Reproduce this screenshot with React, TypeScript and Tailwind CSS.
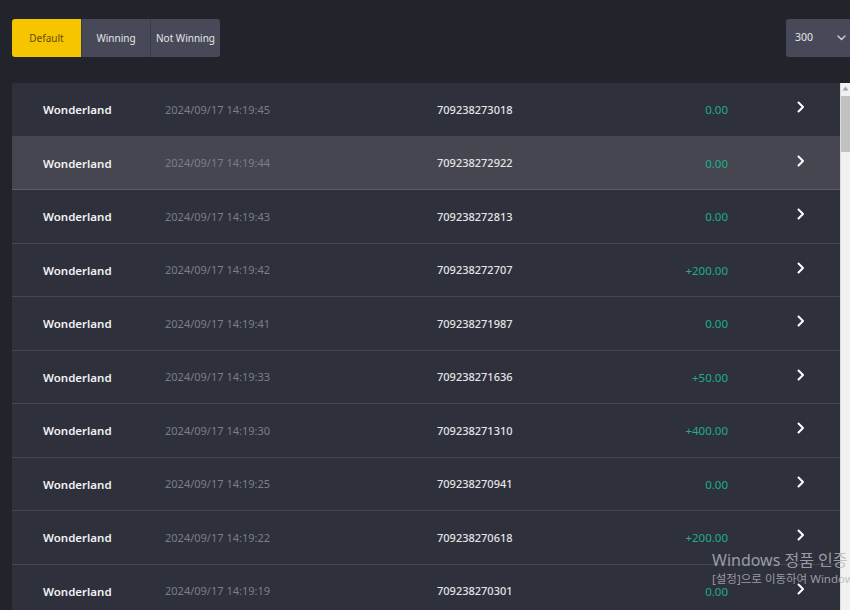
import React from "react";

const rows = [
  { date: "2024/09/17 14:19:45", id: "709238273018", amt: "0.00" },
  { date: "2024/09/17 14:19:44", id: "709238272922", amt: "0.00", hover: true },
  { date: "2024/09/17 14:19:43", id: "709238272813", amt: "0.00" },
  { date: "2024/09/17 14:19:42", id: "709238272707", amt: "+200.00" },
  { date: "2024/09/17 14:19:41", id: "709238271987", amt: "0.00" },
  { date: "2024/09/17 14:19:33", id: "709238271636", amt: "+50.00" },
  { date: "2024/09/17 14:19:30", id: "709238271310", amt: "+400.00" },
  { date: "2024/09/17 14:19:25", id: "709238270941", amt: "0.00" },
  { date: "2024/09/17 14:19:22", id: "709238270618", amt: "+200.00" },
  { date: "2024/09/17 14:19:19", id: "709238270301", amt: "0.00" },
];

function Chevron() {
  return (
    <svg width="8" height="12" viewBox="0 0 8 12" fill="none">
      <path d="M1.5 1.5L6 6L1.5 10.5" stroke="#ffffff" strokeWidth="2" strokeLinecap="round" strokeLinejoin="round" />
    </svg>
  );
}

export default function App() {
  return (
    <div
      className="relative w-[850px] h-[610px] overflow-hidden bg-[#22242c]"
      style={{ fontFamily: '"Noto Sans", "Noto Sans CJK KR", sans-serif' }}
    >
      {/* header */}
      <div className="flex items-center h-[83px] pl-[12px] pb-[7px]">
        <div className="flex h-[38px] rounded-[3px] overflow-hidden text-[10px]">
          <div className="w-[69px] flex items-center justify-center bg-[#f6c500] text-[#5e4e08]">Default</div>
          <div className="w-[1px] bg-[#3a3c48]" />
          <div className="w-[68px] flex items-center justify-center bg-[#474958] text-[#e6e6ea]">Winning</div>
          <div className="w-[1px] bg-[#3a3c48]" />
          <div className="w-[69px] flex items-center justify-center bg-[#474958] text-[#e6e6ea]">Not Winning</div>
        </div>
        <div className="ml-auto mr-[-16px] w-[80px] h-[38px] rounded-[3px] bg-[#474958] flex items-center pl-[9px] text-[10.5px] text-[#e6e6ea]">
          <span>300</span>
          <svg className="ml-[24px]" width="9" height="6" viewBox="0 0 9 6" fill="none">
            <path d="M1 1L4.5 4.5L8 1" stroke="#d0d0d6" strokeWidth="1.4" strokeLinecap="round" strokeLinejoin="round" />
          </svg>
        </div>
      </div>

      {/* list + scrollbar */}
      <div className="flex pl-[12px]">
        <div className="w-[828px] rounded-tl-[3px] overflow-hidden bg-[#2e303b]">
          {rows.map((r, i) => (
            <div
              key={i}
              className={`flex items-center h-[53.5px] pt-[1px] border-b ${r.hover ? "bg-[#45464f] border-[#5a5c66]" : "bg-[#2e303b] border-[#44464f]"}`}
            >
              <div className="w-[153px] pl-[31px] text-[11.5px] font-semibold text-[#f2f2f4]">Wonderland</div>
              <div className="w-[272px] text-[11px] text-[#7c7e88]">{r.date}</div>
              <div className="w-[200px] text-[11px] font-medium text-[#e4e4e8]">{r.id}</div>
              <div className="w-[91px] text-right text-[11.5px] text-[#1fae86]">{r.amt}</div>
              <div className="ml-[69px] mt-[-5px] flex items-center">
                <Chevron />
              </div>
            </div>
          ))}
        </div>
        {/* fake scrollbar */}
        <div className="w-[10px] h-[527px] bg-[#f1f1f1] border-l border-[#dcdcdc] flex flex-col items-center">
          <svg className="mt-[3px]" width="7" height="5" viewBox="0 0 7 5">
            <path d="M3.5 0.5L6.5 4.5H0.5Z" fill="#a3a3a3" />
          </svg>
          <div className="mt-[5px] w-full h-[56px] bg-[#c1c1c1]" />
        </div>
      </div>

      {/* Windows activation watermark */}
      <div className="absolute left-[712px] top-[550px] whitespace-nowrap text-[#b4b6bc] opacity-80 pointer-events-none">
        <div className="text-[16px] leading-[21px]">Windows 정품 인증</div>
        <div className="text-[11.5px] leading-[16px] mt-[0px]">[설정]으로 이동하여 Windows를 정품 인증합니다.</div>
      </div>
    </div>
  );
}
